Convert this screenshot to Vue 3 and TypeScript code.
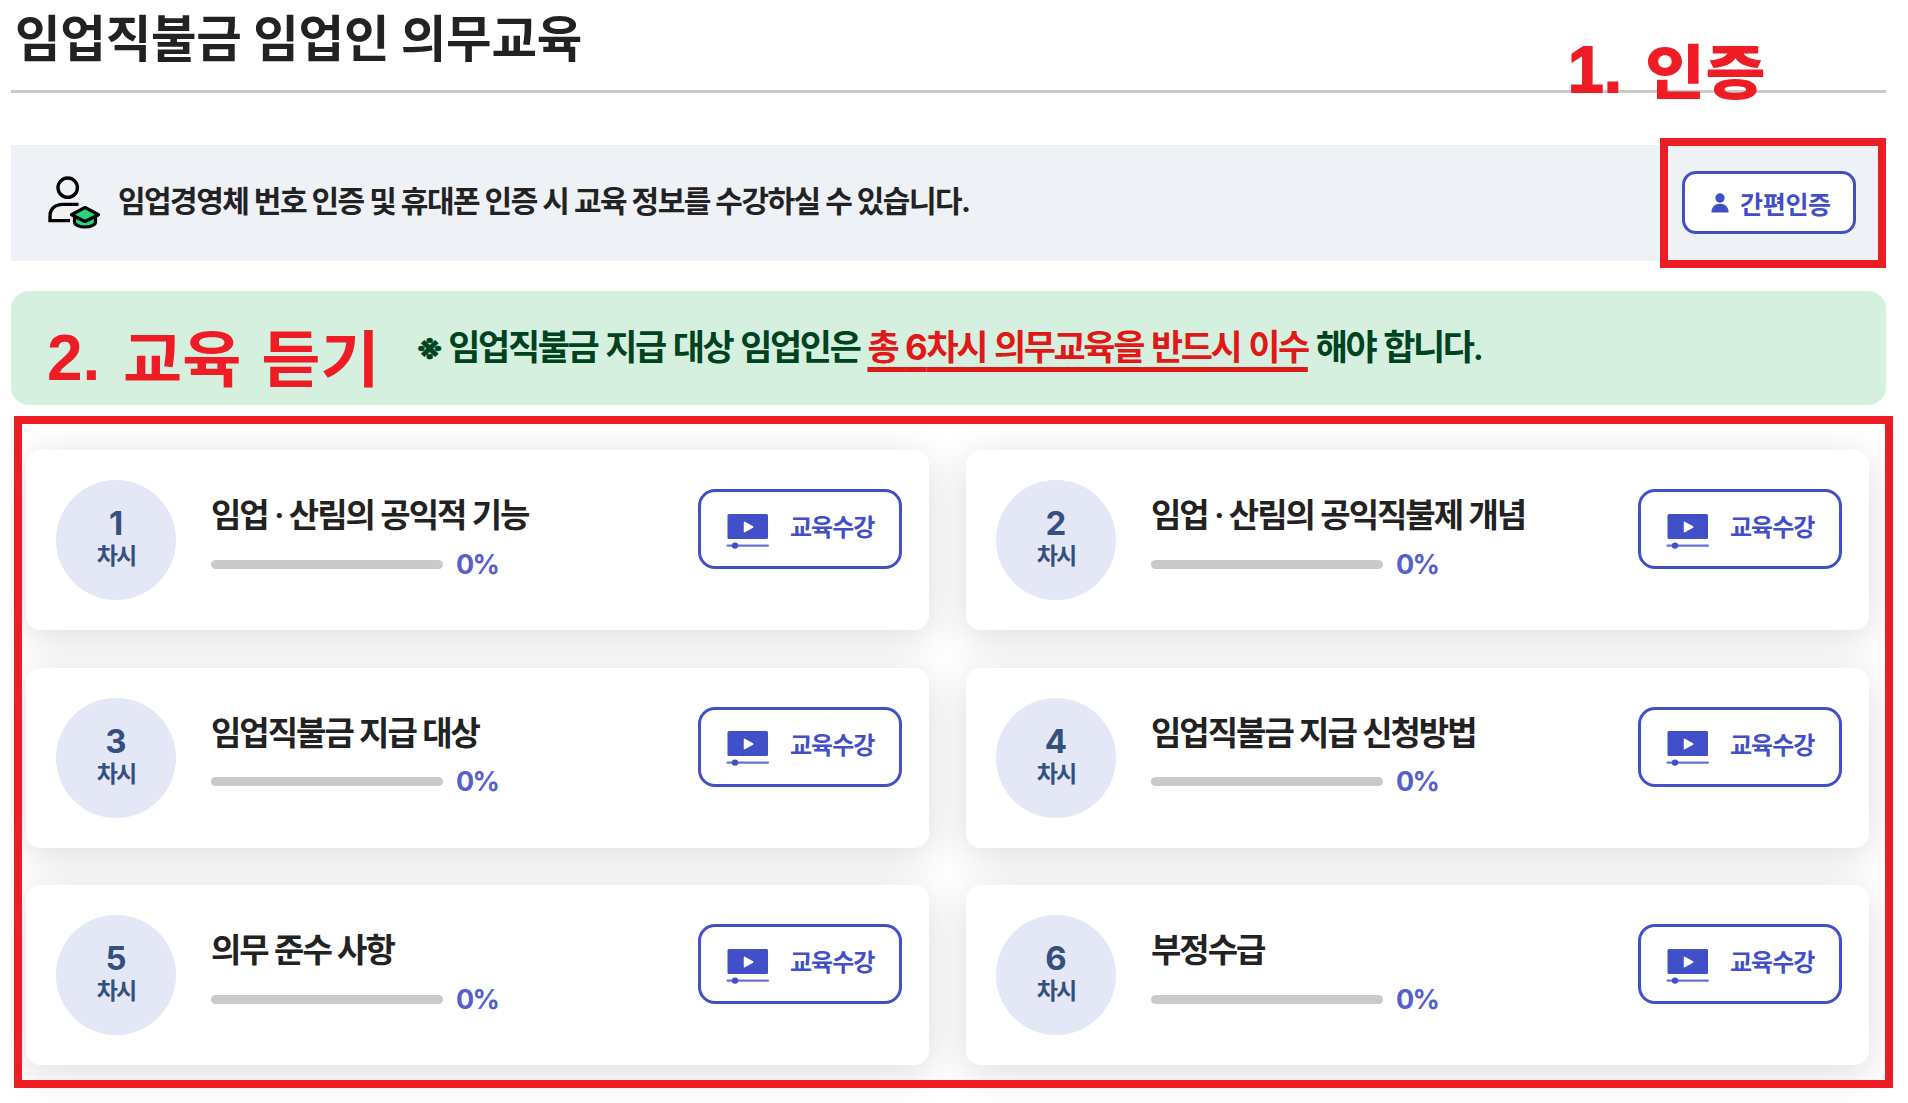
<script setup lang="ts">
interface Lesson {
  no: number
  title: string
  progress: number
}

const lessons: Lesson[] = [
  { no: 1, title: '임업 · 산림의 공익적 기능', progress: 0 },
  { no: 2, title: '임업 · 산림의 공익직불제 개념', progress: 0 },
  { no: 3, title: '임업직불금 지급 대상', progress: 0 },
  { no: 4, title: '임업직불금 지급 신청방법', progress: 0 },
  { no: 5, title: '의무 준수 사항', progress: 0 },
  { no: 6, title: '부정수급', progress: 0 },
]
</script>

<template>
  <main class="page">
    <h1 class="heading"><span>임업직불금 임업인 의무교육</span></h1>

    <section class="auth">
      <svg class="auth-icon" width="54" height="54" viewBox="0 0 54 54">
        <g fill="none" stroke="#000" stroke-width="3.4">
          <circle cx="19.7" cy="12.7" r="9.7" />
          <path d="M30.5 29.4H15C7 29.4 2 34 2 41v4.6h20" fill="#f1f1ef" />
        </g>
        <g stroke="#000" stroke-width="3.2" stroke-linejoin="round">
          <path d="M26.5 40v7c0 3 5 5 10.500 5s10.500-2 10.500-5v-7z" fill="#2bd67b" />
          <path d="M37 32.500l13.500 7.200-13.500 6.800-13.500-6.800z" fill="#2bd67b" />
        </g>
      </svg>
      <p class="auth-text">임업경영체 번호 인증 및 휴대폰 인증 시 교육 정보를 수강하실 수 있습니다.</p>
      <button class="auth-btn" type="button">
        <svg width="18" height="20" viewBox="0 0 18 20" fill="#414fc9">
          <circle cx="9" cy="5" r="4.700" />
          <path d="M.4 19.500C.4 14 4 10.800 9 10.800s8.600 3.200 8.600 8.700z" />
        </svg>
        <span>간편인증</span>
      </button>
    </section>

    <section class="notice">
      <p><i>※</i> 임업직불금 지급 대상 임업인은 <em>총 <b>6</b>차시 의무교육을 반드시 이수</em> 해야 합니다.</p>
    </section>

    <section class="lessons">
      <article v-for="lesson in lessons" :key="lesson.no" class="card">
        <div class="badge">
          <b>{{ lesson.no }}</b>
          <span>차시</span>
        </div>
        <div class="info">
          <h2>{{ lesson.title }}</h2>
          <div class="progress">
            <div class="track"><div class="fill" :style="{ width: lesson.progress + '%' }"></div></div>
            <span>{{ lesson.progress }}%</span>
          </div>
        </div>
        <button class="play" type="button">
          <svg width="44" height="38" viewBox="0 0 44 38" fill="#414fc9">
            <rect x="1.500" y="1" width="40.500" height="25" rx="1.500" />
            <path d="M18.500 9.300v9.400l8.200-4.700z" fill="#fff" stroke="#fff" stroke-width="1.500" stroke-linejoin="round" />
            <rect x=".5" y="31.500" width="42.500" height="2.300" rx="1.100" opacity=".8" />
            <circle cx="9" cy="32.600" r="3.200" />
          </svg>
          <span>교육수강</span>
        </button>
      </article>
    </section>

    <div class="frame frame-auth"></div>
    <div class="frame frame-lessons"></div>
    <div class="mark mark-auth">1. <span>인증</span></div>
    <div class="mark mark-lessons">2. <span>교육 듣기</span></div>
  </main>
</template>

<style>
body {
  margin: 0;
  background: #fff;
}
</style>

<style scoped>
.page {
  position: relative;
  box-sizing: border-box;
  width: 1908px;
  height: 1103px;
  padding: 0 22px 0 11px;
  overflow: hidden;
  font-family: Inter, 'Noto Sans CJK KR', sans-serif;
  color: #222;
}
h1, h2, p { margin: 0; }
.heading {
  box-sizing: border-box;
  height: 93px;
  padding: 3px 0 0 4px;
  border-bottom: 3px solid #cacaca;
  font-size: 49.5px;
  line-height: 72px;
  font-weight: 700;
  letter-spacing: -0.2px;
  white-space: nowrap;
}
.auth {
  display: flex;
  align-items: center;
  box-sizing: border-box;
  height: 116px;
  margin-top: 52px;
  padding: 0 30px 0 37px;
  background: #eef1f6;
}
.auth-icon {
  flex: none;
  margin-bottom: 2px;
}
.auth-text {
  flex: 1;
  margin-left: 16px;
  padding-bottom: 4px;
  font-size: 30px;
  line-height: 40px;
  font-weight: 700;
  letter-spacing: -1.54px;
  white-space: nowrap;
}
button {
  display: flex;
  align-items: center;
  box-sizing: border-box;
  flex: none;
  border: 3px solid #414fc9;
  background: #fff;
  color: #414fc9;
  font-family: inherit;
  white-space: nowrap;
}
.auth-btn {
  width: 174px;
  height: 63px;
  margin-bottom: 1px;
  padding: 0 0 0 26px;
  border-radius: 14px;
  font-size: 25px;
  font-weight: 700;
  letter-spacing: -0.3px;
}
.auth-btn span { margin-left: 11px; }
.notice {
  display: flex;
  justify-content: center;
  box-sizing: border-box;
  height: 114px;
  margin-top: 30px;
  padding-top: 30px;
  border-radius: 18px;
  background: #d5f0de;
  color: #00431f;
}
.notice p {
  font-size: 35px;
  line-height: 52px;
  font-weight: 600;
  letter-spacing: -2.4px;
  word-spacing: 1.5px;
  white-space: nowrap;
}
.notice i {
  font-style: normal;
  font-weight: 700;
  letter-spacing: -3.5px;
  -webkit-text-stroke: 0.7px #00431f;
}
.notice em {
  font-style: normal;
  color: #e01818;
  text-decoration: underline 5px;
  text-underline-offset: 7px;
  text-decoration-skip-ink: none;
}
.notice b {
  font-weight: 700;
  letter-spacing: -1.4px;
}
.lessons {
  display: grid;
  grid-template-columns: 903px 903px;
  grid-auto-rows: 180px;
  gap: 37.5px 37px;
  height: 698px;
  padding: 45px 17px 0 15px;
  box-sizing: border-box;
  overflow: clip;
}
.card {
  display: flex;
  align-items: flex-start;
  box-sizing: border-box;
  padding: 30px 27px 30px 30px;
  border-radius: 15px;
  background: rgba(255, 255, 255, 0.85);
  box-shadow: 0 8px 40px rgba(0, 0, 0, 0.14);
}
.badge {
  display: flex;
  flex-direction: column;
  align-items: center;
  box-sizing: border-box;
  flex: none;
  width: 120px;
  height: 120px;
  padding-top: 24px;
  border-radius: 50%;
  background: #e3e7f6;
  color: #34507f;
}
.badge b {
  font-size: 33px;
  line-height: 38px;
  font-weight: 700;
}
.badge span {
  font-size: 23px;
  line-height: 29px;
  font-weight: 600;
  letter-spacing: -2px;
}
.info {
  flex: 1;
  padding: 12px 0 0 35px;
}
.info h2 {
  font-size: 33px;
  line-height: 46px;
  font-weight: 600;
  letter-spacing: -2px;
  white-space: nowrap;
}
.progress {
  display: flex;
  align-items: center;
  margin-top: 8px;
  height: 36px;
}
.track {
  width: 232px;
  height: 9px;
  border-radius: 5px;
  background: #cacaca;
  overflow: hidden;
}
.fill {
  height: 100%;
  background: #414fc9;
}
.progress span {
  margin: 1px 0 0 13px;
  font-size: 27px;
  line-height: 36px;
  font-weight: 700;
  letter-spacing: -1.6px;
  color: #5560cb;
}
.play {
  width: 204px;
  height: 80px;
  margin-top: 9px;
  padding: 0 0 0 25px;
  border-radius: 17px;
  font-size: 24px;
  font-weight: 600;
  letter-spacing: -1px;
}
.play svg { margin-top: 5px; }
.play span { margin: 0 0 7px 20px; }
.frame {
  position: absolute;
  box-sizing: border-box;
  border: 8px solid #ee1c24;
}
.frame-auth {
  left: 1660px;
  top: 138px;
  width: 226px;
  height: 130px;
}
.frame-lessons {
  left: 14px;
  top: 416px;
  width: 1879px;
  height: 672px;
}
.mark {
  position: absolute;
  font-family: 'Liberation Sans', 'Noto Sans CJK KR', sans-serif;
  font-size: 64px;
  line-height: 80px;
  font-weight: 700;
  color: #ee1c24;
  white-space: pre;
}
.mark span {
  display: inline-block;
  transform-origin: 0 80%;
}
.mark-auth {
  left: 1568px;
  top: 30px;
  font-weight: 900;
  letter-spacing: 0.5px;
  -webkit-text-stroke: 1.8px #ee1c24;
}
.mark-auth span {
  margin-left: 4px;
  transform: translateY(2px) scale(1.02, 0.92);
  -webkit-text-stroke: 0;
}
.mark-lessons {
  left: 47px;
  top: 318px;
}
.mark-lessons span {
  margin-left: 5px;
  word-spacing: 2px;
  transform: translateY(2px) scale(1.005, 0.95);
}
</style>
